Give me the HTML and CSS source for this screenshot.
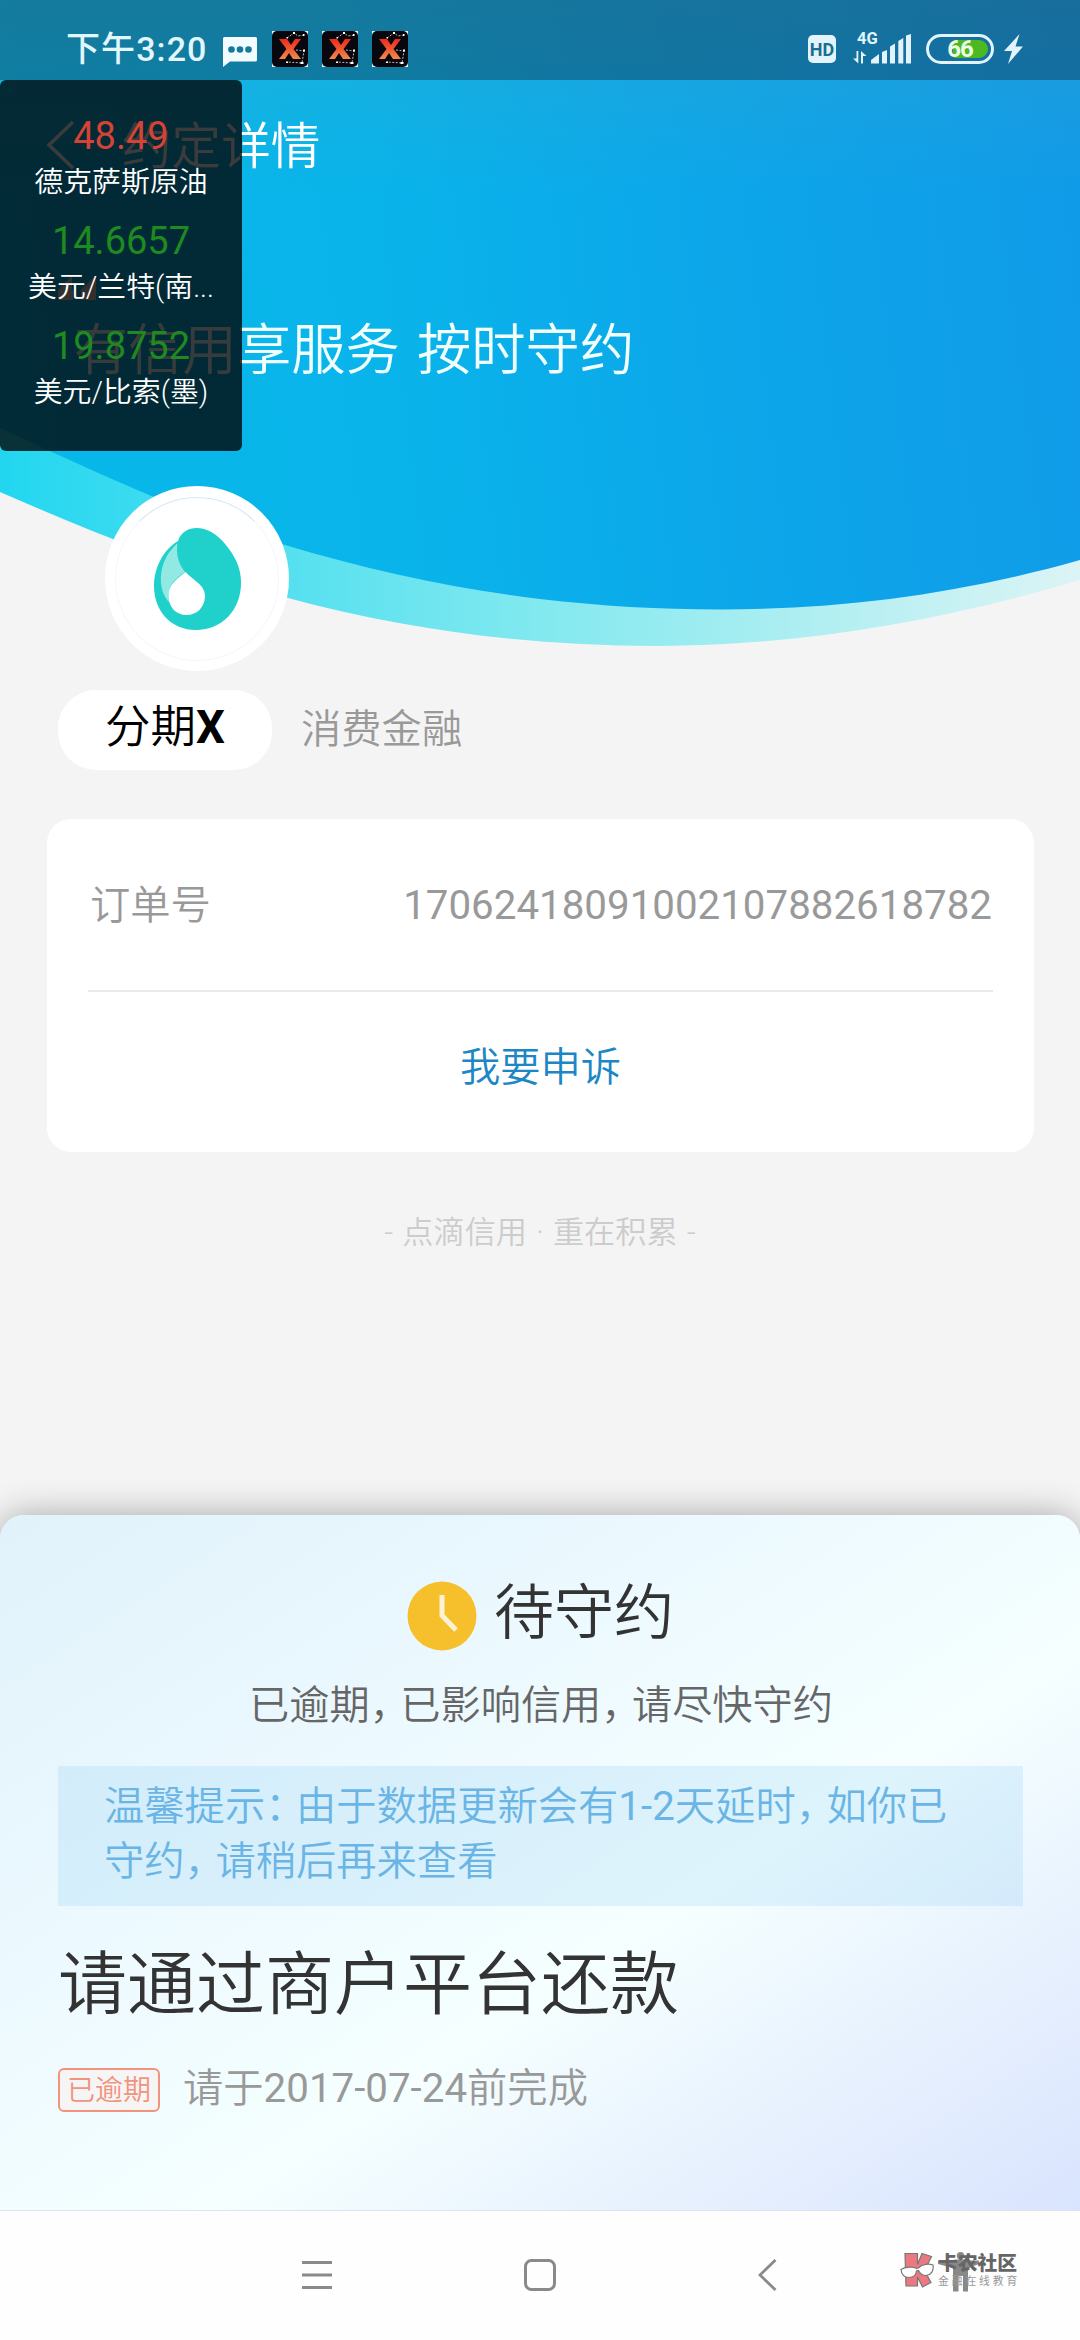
FILE: index.html
```html
<!DOCTYPE html>
<html lang="zh-CN">
<head>
<meta charset="utf-8">
<title>约定详情</title>
<link rel="stylesheet" href="styles.css">
</head>
<body>
<svg class="defs" width="0" height="0" aria-hidden="true">
  <defs>
    <linearGradient id="flame" x1="0" y1="0" x2="0" y2="1"><stop offset="0" stop-color="#f0281a"/><stop offset="1" stop-color="#f08a4a"/></linearGradient>
    <symbol id="xapp" viewBox="0 0 36 36">
      <rect width="36" height="36" fill="#e8f6fb"/>
      <rect width="36" height="36" rx="5" fill="#07070d"/>
      <path d="M7 8h8l4 6 4-6h6l-7.500 10L29 28h-8l-4-6-4 6H7l7.500-10z" fill="url(#flame)"/>
      <path d="M15 7l7-5 4 3 6-1M24 19l8 1-2 12-15-1" fill="none" stroke="#fff" stroke-width=".7" stroke-dasharray="2 1.500"/>
      <path d="M21 1h2v2h-2zM31 3h1.500v2H31zM31 18.500h2v2h-2zM28.500 31h3v2h-3zM14 30.500h2v1.500h-2zM14.500 6h1.500v1.500h-1.500z" fill="#fff"/>
    </symbol>
  </defs>
</svg>
<div class="screen">
  <svg class="hero" width="1080" height="660" viewBox="0 0 1080 660" aria-hidden="true">
    <defs>
      <linearGradient id="sky" gradientUnits="userSpaceOnUse" x1="0" y1="330" x2="1080" y2="200"><stop offset="0" stop-color="#08b8e9"/><stop offset=".35" stop-color="#09b4ea"/><stop offset=".62" stop-color="#0ca8ea"/><stop offset="1" stop-color="#109be8"/></linearGradient>
      <linearGradient id="band"><stop offset="0" stop-color="#22d6f0"/><stop offset=".5" stop-color="#82e9ef"/><stop offset="1" stop-color="#dcf4f5"/></linearGradient>
      <linearGradient id="veil" x1="0" y1="0" x2="0" y2="1"><stop offset="0" stop-color="#4a9fb8" stop-opacity=".3"/><stop offset="1" stop-color="#4a9fb8" stop-opacity="0"/></linearGradient>
    </defs>
    <path fill="url(#band)" d="M0 0V492C96 534 192 572 288 598C410 631 533 646 655 646C797 646 938 622 1080 580V0z"/>
    <path fill="url(#sky)" d="M0 0V428C95 472 190 516.500 285 545C370 570.500 455 589 540 599C600 606 660 609.500 720 609.500C840 609.500 960 594 1080 560V0z"/>
    <rect width="1080" height="190" fill="url(#veil)"/>
  </svg>

  <header class="status">
    <span class="clock">下午3:20</span>
    <svg class="msg" width="34" height="30" viewBox="0 0 34 30"><path d="M1.500 0h31a1.500 1.500 0 0 1 1.500 1.500V23a1.500 1.500 0 0 1-1.500 1.500H7L0 30V1.500A1.500 1.500 0 0 1 1.500 0z" fill="#f2fcff"/><g fill="#147a9c"><circle cx="8.500" cy="12.500" r="3.300"/><circle cx="17" cy="12.500" r="3.300"/><circle cx="25.500" cy="12.500" r="3.300"/></g></svg>
    <span class="apps"><svg width="36" height="36"><use href="#xapp"/></svg><svg width="36" height="36"><use href="#xapp"/></svg><svg width="36" height="36"><use href="#xapp"/></svg></span>
    <span class="hd">HD</span>
    <span class="cell">
      <span class="gen">4G</span>
      <svg class="bars" width="58" height="30" viewBox="0 0 58 30" fill="#e2f3fb"><path d="M3.500 17h1.800v12.500L0 24.500h3.500zM8 29.500V17l5.500 5H10v7.500z"/><path d="M18 29.500v-3.500l8-6v9.500zM29 29.500V18l5-2v13.500zM37 29.500V12.500l5-3v20zM45.300 29.500V7l5-3v25.500zM53 29.500V1.500l5-1.500v29.500z"/></svg>
    </span>
    <span class="battery"><span class="charge"></span><span class="level">66</span></span>
    <svg class="bolt" width="19" height="30" viewBox="0 0 19 30"><path d="M15.500 0L0 17h8L4 30 19 12.500h-7.500z" fill="#e2f3fb"/></svg>
  </header>

  <div class="titlebar">
    <svg width="30" height="50" viewBox="0 0 30 50"><path d="M27 2L3 25l24 23" fill="none" stroke="#fff" stroke-width="3.500"/></svg>
    <h1>约定详情</h1>
  </div>
  <svg class="quote" width="40" height="25" viewBox="0 0 40 25"><path d="M0 25V15L14 0v15h1v10zM23 25V15L38 0v25z" fill="#ffd0c0" opacity=".85"/></svg>
  <p class="slogan">有信用享服务 按时守约</p>

  <div class="logo">
    <svg width="87" height="102" viewBox="0 0 87 102">
      <path d="M43 0C57 0 68 11 75 21C83 32 87 42 87 55C87 82 68 102 42 102C17 102 0 83 0 58C0 40 9 22 24 13C27 4 34 0 43 0z" fill="#1fd1ca"/>
      <path d="M23.500 15C10 27 6 42 7 55C8 64 11 70 15 74C13 57 21 51 31 44C24 35 22 26 23.500 15z" fill="#92e9e4"/>
      <path d="M31.500 44C40 53 51 57 51 68C51 79 43 87 32.500 87C22 87 14.500 79 14.500 68C14.500 56 23 51 31.500 44z" fill="#fff"/>
    </svg>
  </div>
  <div class="merchant"><span class="pill">分期<b>X</b></span><span class="kind">消费金融</span></div>

  <section class="card">
    <div class="order"><span>订单号</span><span class="num">17062418091002107882618782</span></div>
    <a class="appeal">我要申诉</a>
  </section>
  <p class="motto">- 点滴信用 · 重在积累 -</p>

  <section class="sheet">
    <div class="state">
      <svg width="70" height="70" viewBox="0 0 70 70"><circle cx="35" cy="35" r="34.500" fill="#f6c02d"/><path d="M35 14v20.500L49 49" fill="none" stroke="#fdf3d4" stroke-width="5"/></svg>
      <h2>待守约</h2>
    </div>
    <p class="desc">已逾期<i>，</i>已影响信用<i>，</i>请尽快守约</p>
    <p class="tip">温馨提示<i>：</i>由于数据更新会有<span class="num">1-2</span>天延时<i>，</i>如你已<br>守约<i>，</i>请稍后再来查看</p>
    <h3>请通过商户平台还款</h3>
    <div class="due"><span class="tag">已逾期</span><span class="date">请于<span class="num">2017-07-24</span>前完成</span></div>
  </section>

  <nav class="nav">
    <svg class="menu" width="30" height="32" viewBox="0 0 30 32"><path d="M0 3.500h30M0 16h30M0 28.500h30" stroke="#8a8a8a" stroke-width="2.800"/></svg>
    <svg class="home" width="32" height="32" viewBox="0 0 32 32"><rect x="1.500" y="1.500" width="29" height="29" rx="6" fill="none" stroke="#8a8a8a" stroke-width="3"/></svg>
    <svg class="back" width="19" height="32" viewBox="0 0 19 32"><path d="M17.500 1L2 16l15.500 15" fill="none" stroke="#8a8a8a" stroke-width="2.800"/></svg>
    <svg class="person" width="41" height="40" viewBox="0 0 41 40" fill="#888"><circle cx="22.500" cy="3.700" r="3.700"/><path d="M0 8.500h14l3-1h11l3 1h10v3.500l-11 4V39.500h-5V24h-4.500v15.500H15V16L0 12z"/></svg>
  </nav>

  <div class="watermark">
    <svg width="34" height="37" viewBox="0 0 34 37"><path d="M5 1.500h12.500v11L22 1.500l9.500 3-7 14L31 30.500 22.500 35l-5-10v9H6z" fill="#ec7982" stroke="#777" stroke-width="1.200"/><path d="M1 17.500C5 15 13 14 16.500 16.500L19 15.500C22 12 29 11.500 33 13C34 19 31 23 26 23.500C22 23.500 20 21.500 18.500 18.500L16.500 19C16 23 13 25.500 9 25.500C4 25.500 1.500 22.500 1 17.500z" fill="#fff" stroke="#777" stroke-width="1.200"/></svg>
    <div class="brand"><strong>卡农社区</strong><small>金融在线教育</small></div>
  </div>

  <aside class="ticker">
    <div class="quote-item"><span class="price up">48.49</span><span class="name">德克萨斯原油</span></div>
    <div class="quote-item"><span class="price">14.6657</span><span class="name">美元/兰特(南...</span></div>
    <div class="quote-item"><span class="price">19.8752</span><span class="name">美元/比索(墨)</span></div>
  </aside>
</div>
</body>
</html>
```
FILE: styles.css
```css
* { box-sizing: border-box; margin: 0; padding: 0; }
body {
  width: 1080px;
  background: #f4f4f4;
  font-family: Roboto, "Noto Sans CJK SC", sans-serif;
  font-weight: 350;
  color: #333;
}
svg { display: block; flex: none; }
i { font-style: normal; margin-right: -9.500px; }
h1, h2, h3 { font-weight: inherit; }
.defs { position: absolute; }
.num { font-weight: 400; }

.screen {
  position: relative;
  isolation: isolate;
  display: flex;
  flex-direction: column;
  width: 1080px;
  height: 2340px;
  overflow: hidden;
}
.hero { position: absolute; left: 0; top: 0; z-index: -1; }

.status {
  display: flex;
  align-items: center;
  height: 80px;
  padding: 18px 57px 0 66px;
  background: rgba(8, 30, 50, .36);
  color: #e2f6fd;
}
.clock { width: 157px; font-size: 34px; font-weight: 500; line-height: 40px; letter-spacing: 1.100px; white-space: nowrap; }
.msg { margin-top: 5px; }
.apps { display: flex; gap: 14px; margin: 0 auto 0 15px; }
.hd {
  width: 28px; height: 28px; margin-right: 17px;
  border-radius: 5px; background: #e2f3fb; color: #176f92;
  font-size: 18px; font-weight: 700; line-height: 29px; text-align: center;
}
.cell { position: relative; margin-right: 15px; }
.gen { position: absolute; left: 4px; top: -4px; font-size: 16.500px; font-weight: 700; line-height: 18px; }
.battery {
  position: relative;
  width: 68px; height: 30px; margin-right: 10px;
  border: 3px solid #e2f3fb; border-radius: 15px;
}
.charge { position: absolute; left: 24px; top: 3px; width: 35px; height: 18px; border-radius: 3px 9px 9px 3px; background: #4cb921; }
.level { position: absolute; left: 0; width: 62px; line-height: 25px; text-align: center; font-size: 24px; font-weight: 700; letter-spacing: -1px; color: #edfbe9; }

.titlebar { display: flex; align-items: center; height: 133px; padding-left: 46px; color: #fff; }
.titlebar svg { margin-top: -4px; }
h1 { margin-left: 46px; font-size: 49.600px; line-height: 60px; }
.quote { margin: 62px 0 0 58px; }
.slogan { margin: 11px 0 0 74px; font-size: 54.300px; line-height: 80px; word-spacing: 4px; color: #f2ffff; }

.logo {
  display: grid; place-items: center;
  width: 184px; height: 185px; margin: 95px 0 0 105px;
  border-radius: 50%; background: #fff;
}
.logo::before { content: ""; grid-area: 1 / 1; width: 162px; height: 162px; border: 1px solid #f3f7fa; border-top-color: #d5e8f3; border-radius: 50%; }
.logo svg { grid-area: 1 / 1; margin-left: 1px; }
.merchant { display: flex; align-items: center; margin: 19px 0 0 58px; }
.pill {
  width: 214px; height: 80px;
  border-radius: 38px; background: #fff; color: #000;
  font-size: 45.500px; line-height: 76px; text-align: center;
}
.pill b { font-weight: 700; }
.kind { margin-left: 29px; font-size: 40.300px; line-height: 80px; color: #999; }

.card {
  height: 333px; margin: 49px 46px 0 47px; padding: 0 41px;
  border-radius: 24px; background: #fff;
  font-size: 40.300px; color: #999;
}
.order { display: flex; justify-content: space-between; height: 173px; padding: 0 1px 0 2px; border-bottom: 2px solid #e9e9e9; line-height: 173px; }
.appeal { display: block; line-height: 152px; text-align: center; color: #1d86c4; }
.motto { margin-top: 61px; font-size: 31.200px; line-height: 40px; word-spacing: 1.500px; text-align: center; color: #ccc; }

.sheet {
  height: 695px; margin-top: auto; padding: 66px 57px 0 58px;
  border-radius: 24px 24px 0 0;
  background: linear-gradient(to bottom right, #e1f2fa 0%, #e9f7fe 25%, #f5ffff 60%, #e9f3fe 77%, #d9e4fe 100%);
  box-shadow: 0 0 34px rgba(0, 0, 0, .32);
}
.state { display: flex; justify-content: center; height: 70px; margin-left: 0; gap: 17px; }
h2 { font-size: 60px; line-height: 66px; }
.desc { margin-top: 30px; padding-left: 1px; font-size: 40.200px; line-height: 50px; text-align: center; color: #666; }
.tip {
  height: 140px; margin-top: 35px; padding: 13px 0 0 46px;
  background: rgba(100, 185, 235, .16); color: #6ab5e5;
  font-size: 40.300px; line-height: 55px; white-space: nowrap;
}
h3 { margin-top: 35px; font-size: 69px; line-height: 90px; }
.due { display: flex; align-items: center; gap: 23px; height: 43px; margin-top: 37px; font-size: 40.300px; line-height: 40px; color: #999; }
.date { margin-top: -2px; }
.tag { width: 102px; height: 44px; border: 2.500px solid #f2937e; border-radius: 6px; background: rgba(255, 235, 230, .4); color: #f2937e; font-size: 28px; line-height: 42px; text-align: center; }

.nav { display: flex; height: 130px; padding: 48px 0 0 302px; border-top: 1px solid #dfe3ea; background: #fefefe; }
.home { margin-left: 192px; }
.back { margin-left: 202px; }
.person { margin: -7px 0 0 161px; }

.watermark { position: absolute; left: 900px; top: 2252px; display: flex; gap: 4px; }
.brand { display: flex; flex-direction: column; white-space: nowrap; }
.brand strong { margin-top: 1px; font-size: 19.800px; font-weight: 900; line-height: 22px; color: #666; }
.brand small { font-size: 10.800px; line-height: 14px; letter-spacing: 2.900px; font-weight: 400; color: #999; }

.ticker {
  position: absolute; left: 0; top: 80px; width: 242px; height: 371px; padding-top: 34px;
  border-radius: 6px; background: rgba(0, 0, 0, .77); text-align: center;
}
.quote-item { display: flex; flex-direction: column; height: 105px; }
.price { font-size: 38px; font-weight: 400; line-height: 45px; color: #1f8a1f; }
.up { color: #d64236; }
.name { font-size: 28.900px; line-height: 46px; color: #fff; white-space: nowrap; }
```
